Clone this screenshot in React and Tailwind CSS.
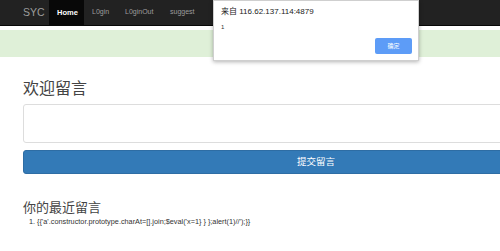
import React from 'react'

const font = { fontFamily: '"Liberation Sans", "Noto Sans CJK SC", sans-serif' }

const NavBar = () => (
  <div className="h-[26px] bg-[#222222] border-b border-[#080808] flex items-stretch">
    <span className="w-[49px] pl-[23px] flex items-center text-[10.5px] text-[#9d9d9d]">SYC</span>
    <span className="w-[35px] pl-[8px] bg-[#080808] flex items-center text-[7.5px] font-bold text-white">Home</span>
    <span className="w-[41px] pl-[8px] flex items-center text-[7px] text-[#9d9d9d]">L0gin</span>
    <span className="w-[45px] flex items-center text-[7px] text-[#9d9d9d]">L0ginOut</span>
    <span className="flex items-center text-[7px] text-[#9d9d9d]">suggest</span>
  </div>
)

const AlertBox = () => (
  <div className="absolute left-[213px] top-0 w-[206px] h-[61px] bg-white border border-[#cfcfcf] shadow-[0_1px_4px_rgba(0,0,0,0.3)]">
    <div className="pl-[7px] pt-[5px] text-[8px] text-[#222]">来自 116.62.137.114:4879</div>
    <div className="pl-[7px] pt-[5px] text-[6px] text-[#333]">1</div>
    <button className="absolute left-[161px] top-[37px] w-[37px] h-[16px] rounded-[2px] bg-[#5d9cf7] text-white text-[6px] leading-none">确定</button>
  </div>
)

export default function App() {
  return (
    <div className="relative w-[500px] h-[251px] overflow-hidden bg-white" style={font}>
      <NavBar />
      <div className="mt-[4px] h-[27px] bg-[#dff0d8]" />
      <div className="w-[586px] ml-[23px] mt-[21px]">
        <h2 className="text-[16px] leading-[22px] text-[#444]">欢迎留言</h2>
        <div className="mt-[4px] h-[39px] border border-[#dddddd] rounded-[3px] bg-white" />
        <button className="mt-[7px] w-full h-[24px] rounded-[3px] bg-[#337ab7] border border-[#2e6da4] text-white text-[9.5px]">提交留言</button>
        <h3 className="mt-[26px] text-[13px] leading-[16px] text-[#444]">你的最近留言</h3>
        <ol className="mt-[1px] pl-[14px] list-decimal text-[7.3px] text-[#333]">
          <li>{"{{'a'.constructor.prototype.charAt=[].join;$eval('x=1} } };alert(1)//');}}"}</li>
        </ol>
      </div>
      <AlertBox />
    </div>
  )
}
